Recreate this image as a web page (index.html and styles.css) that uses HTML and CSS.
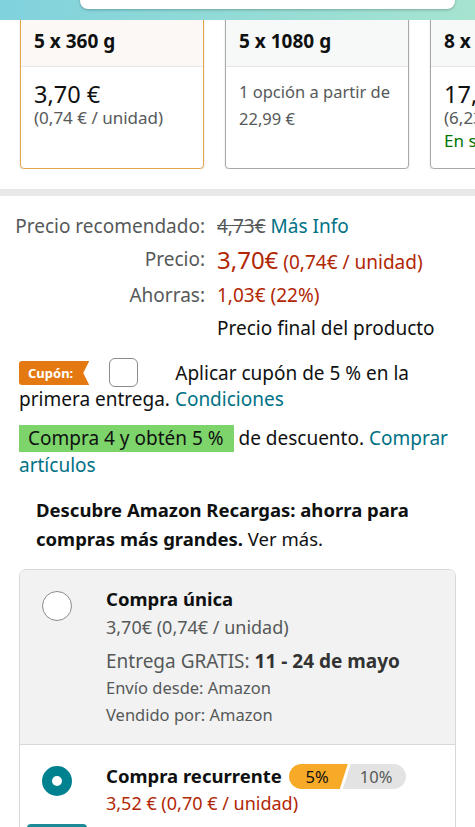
FILE: index.html
```html
<!DOCTYPE html>
<html lang="es">
<head>
    <meta charset="UTF-8">
    <meta name="viewport" content="width=device-width, initial-scale=1.0">
    <title>Producto</title>
    <link rel="stylesheet" href="styles.css">
</head>
<body>
    <header class="topbar">
        <div class="search-box"></div>
    </header>

    <!-- variantes de tamaño -->
    <div class="variants">
        <div class="variant selected">
            <div class="variant-head">5 x 360 g</div>
            <div class="variant-body">
                <p class="v-price">3,70 €</p>
                <p class="v-unit">(0,74 € / unidad)</p>
            </div>
        </div>
        <div class="variant">
            <div class="variant-head">5 x 1080 g</div>
            <div class="variant-body options">
                <p class="v-option">1 opción a partir de</p>
                <p class="v-option">22,99 €</p>
            </div>
        </div>
        <div class="variant">
            <div class="variant-head">8 x 1080 g</div>
            <div class="variant-body">
                <p class="v-price">17,99 €</p>
                <p class="v-unit">(6,23 € / kg)</p>
                <p class="v-stock">En stock</p>
            </div>
        </div>
    </div>

    <div class="divider"></div>

    <div class="price-table">
        <span class="label">Precio recomendado:</span>
        <span><s class="old">4,73€</s> <a href="#" class="link">Más Info</a></span>
        <span class="label">Precio:</span>
        <span class="red"><span class="big">3,70€</span> (0,74€ / unidad)</span>
        <span class="label">Ahorras:</span>
        <span class="red">1,03€ (22%)</span>
        <span></span>
        <span>Precio final del producto</span>
    </div>

    <p class="coupon">
        <span class="coupon-badge">Cupón:</span><span class="checkbox"></span><span class="coupon-text">Aplicar cupón de 5 % en la primera entrega.</span>
        <a href="#" class="link">Condiciones</a>
    </p>

    <p class="promo">
        <span class="promo-tag">Compra 4 y obtén 5 %</span> de descuento. <a href="#" class="link">Comprar artículos</a>
    </p>

    <p class="recargas"><b>Descubre Amazon Recargas: ahorra para compras más grandes.</b> Ver más.</p>

    <div class="buy-box">
        <div class="buy-option single">
            <span class="radio"></span>
            <div class="option-info">
                <p class="option-title">Compra única</p>
                <p class="option-price">3,70€ (0,74€ / unidad)</p>
                <p class="delivery">Entrega GRATIS: <b>11 - 24 de mayo</b></p>
                <p class="small">Envío desde: Amazon</p>
                <p class="small">Vendido por: Amazon</p>
            </div>
        </div>
        <div class="buy-option recurring">
            <span class="radio checked"></span>
            <div class="option-info">
                <p class="option-title">Compra recurrente
                    <span class="save-tiers"><span class="tier-on">5%</span><span class="tier-off">10%</span></span>
                </p>
                <p class="option-price red">3,52 € (0,70 € / unidad)</p>
            </div>
            <div class="freq-bar"></div>
        </div>
    </div>
</body>
</html>
```

FILE: styles.css
```css
* {
    margin: 0;
    padding: 0;
    box-sizing: border-box;
}

body {
    font-family: 'Noto Sans', 'Liberation Sans', sans-serif;
    font-size: 19px;
    color: #0f1111;
    background-color: #fff;
    width: 475px;
    overflow: hidden;
}

b {
    font-size: 18.5px;
}

a {
    text-decoration: none;
}

.link {
    color: #007185;
}

.red {
    color: #b12704;
}

/* barra superior fija */
.topbar {
    position: fixed;
    top: 0;
    left: 0;
    right: 0;
    height: 20px;
    background: linear-gradient(90deg, #80d2dd, #a6e4d0);
    z-index: 5;
}

.search-box {
    position: absolute;
    top: -10px;
    left: 80px;
    width: 375px;
    height: 19px;
    background-color: #fff;
    border-radius: 8px;
    box-shadow: 0 1px 3px rgba(0, 0, 0, 0.25);
}

.variants {
    display: flex;
    gap: 21px;
    padding: 14px 0 0 20px;
    overflow: hidden;
}

.variant {
    flex: 0 0 184px;
    height: 155px;
    border: 1px solid #a6a9a9;
    border-radius: 4px;
    box-shadow: 0 1px 2px rgba(0, 0, 0, 0.15);
    overflow: hidden;
}

.variant.selected {
    border: 1.5px solid #e3a44c;
}

.variant-head {
    height: 52px;
    padding: 0 13px;
    display: flex;
    align-items: center;
    font-weight: bold;
    font-size: 19px;
    white-space: nowrap;
    background-color: #f7f8f8;
    border-bottom: 1px solid #e6e6e6;
}

.selected .variant-head {
    background-color: #fcf8f6;
}

.variant-body {
    padding: 14px 13px 0;
    white-space: nowrap;
}

.variant-body.options {
    padding-top: 11px;
}

.v-price {
    font-size: 23.5px;
    line-height: 26px;
}

.v-unit {
    font-size: 17px;
    line-height: 22px;
    color: #565959;
}

.v-option {
    font-size: 16.5px;
    line-height: 27px;
    color: #565959;
}

.v-stock {
    font-size: 17px;
    line-height: 24px;
    color: #007600;
}

.divider {
    height: 7px;
    margin-top: 20px;
    background-color: #e7e9e9;
}

.price-table {
    display: grid;
    grid-template-columns: 205px auto;
    column-gap: 12px;
    padding-top: 14px;
    line-height: 33px;
    white-space: nowrap;
}

.price-table .label {
    text-align: right;
    color: #565959;
}

.old {
    color: #565959;
}

.big {
    font-size: 24px;
}

.coupon {
    margin-top: 15px;
    padding: 0 19px;
    line-height: 26px;
}

.coupon-badge {
    display: inline-block;
    vertical-align: middle;
    margin-top: -4px;
    height: 24px;
    line-height: 24px;
    padding: 0 16px 0 9px;
    font-size: 13px;
    font-weight: bold;
    color: #fff;
    background-color: #e47911;
    border-radius: 3px 0 0 3px;
    clip-path: polygon(0 0, 100% 0, calc(100% - 6px) 50%, 100% 100%, 0 100%);
}

.checkbox {
    display: inline-block;
    vertical-align: middle;
    width: 29px;
    height: 29px;
    margin: -8px 37px -3px 20px;
    border: 1px solid #888c8c;
    border-radius: 6px;
    background-color: #fff;
}

.promo {
    margin-top: 13px;
    padding: 0 19px;
    line-height: 27px;
}

.promo-tag {
    display: inline-block;
    padding: 0 10px 0 9px;
    background-color: #7dd46b;
}

.recargas {
    margin-top: 16px;
    padding: 0 36px;
    font-size: 18.5px;
    line-height: 29px;
}

.buy-box {
    margin: 16px 19px 0;
    border: 1px solid #d5d9d9;
    border-radius: 7px;
    overflow: hidden;
}

.buy-option {
    display: grid;
    grid-template-columns: 30px auto;
    column-gap: 34px;
    padding: 16px 22px 16px;
}

.buy-option.single {
    background-color: #f2f2f2;
    border-bottom: 1px solid #d5d9d9;
}

.buy-option.recurring {
    padding-top: 18px;
}

.radio {
    width: 30px;
    height: 30px;
    margin-top: 5px;
    border: 1.5px solid #888c8c;
    border-radius: 50%;
    background-color: #fff;
}

.radio.checked {
    border: 10px solid #00818f;
    margin-top: 3px;
}

.option-title {
    font-weight: bold;
    font-size: 18.5px;
    line-height: 26px;
}

.option-price {
    font-size: 18px;
    line-height: 30px;
    color: #565959;
}

.option-price.red {
    color: #b12704;
    line-height: 28px;
}

.delivery {
    margin-top: 6px;
    line-height: 26px;
    color: #565959;
}

.delivery b {
    font-size: 19px;
    color: #333;
}

.small {
    font-size: 16.5px;
    line-height: 27px;
    color: #565959;
}

.save-tiers {
    display: inline-flex;
    vertical-align: middle;
    margin-top: -3px;
    margin-left: 2px;
    font-weight: normal;
    font-size: 16.5px;
    line-height: 25px;
}

.tier-on {
    padding: 0 19px 0 17px;
    background-color: #f7a928;
    border-radius: 13px 0 0 13px;
    clip-path: polygon(0 0, 100% 0, calc(100% - 8px) 100%, 0 100%);
}

.tier-off {
    margin-left: -5px;
    padding: 0 14px 0 17px;
    color: #565959;
    background-color: #e3e3e3;
    border-radius: 0 13px 13px 0;
    clip-path: polygon(8px 0, 100% 0, 100% 100%, 0 100%);
}

.freq-bar {
    grid-column: 1 / 3;
    width: 60px;
    height: 10px;
    margin: 7px 0 0 -15px;
    background-color: #1d8a97;
    border-radius: 4px 4px 0 0;
}
```
